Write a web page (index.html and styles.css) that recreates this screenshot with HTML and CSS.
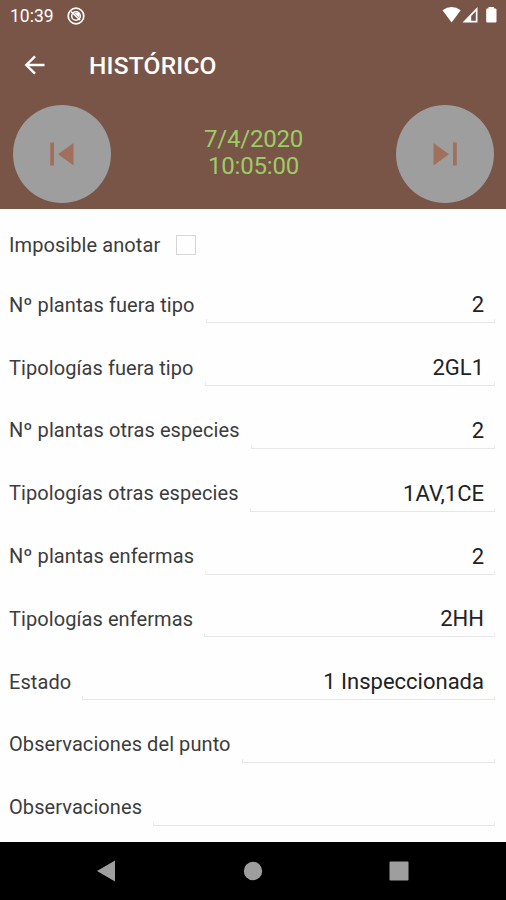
FILE: index.html
```html
<!DOCTYPE html>
<html lang="es">
<head>
    <meta charset="UTF-8">
    <title>Histórico</title>
    <link rel="stylesheet" href="styles.css">
</head>
<body>
<div class="screen">
    <div class="status-bar">
        <span class="clock">10:39</span>
        <svg class="app-icon" width="18" height="18" viewBox="0 0 18 18">
            <circle cx="9" cy="9" r="7.8" fill="none" stroke="#fff" stroke-width="1.7"/>
            <circle cx="9" cy="9" r="4.3" fill="none" stroke="#fff" stroke-width="1.5"/>
            <path d="M4 4.5L13 13" stroke="#fff" stroke-width="1.5"/>
            <path d="M7 6.2L12.5 5.8L12.3 10.5Z" fill="#fff"/>
        </svg>
        <svg class="signals" width="56" height="18" viewBox="0 0 56 18">
            <path d="M0.5 4.2Q9.6 -2 18.7 4.2L9.6 16.4Z" fill="#fff"/>
            <path d="M20.5 16.5L35.5 1V16.5Z" fill="#fff"/>
            <path d="M29.2 14.8V10L33.8 5.2V14.8Z" fill="#795548"/>
            <path d="M46.5 1H52V2.5H53.5Q54.5 2.5 54.5 3.5V15.5Q54.5 16.5 53.5 16.5H45.2Q44.2 16.5 44.2 15.5V3.5Q44.2 2.5 45.2 2.5H46.5Z" fill="#fff"/>
        </svg>
    </div>

    <div class="app-bar">
        <svg class="back" width="22" height="20" viewBox="0 0 22 20">
            <path d="M20.5 10H2.5M11 1.3L2.3 10L11 18.7" fill="none" stroke="#fff" stroke-width="2.4"/>
        </svg>
        <h1>HISTÓRICO</h1>
    </div>

    <div class="date-nav">
        <button class="round" aria-label="Anterior">
            <svg width="26" height="24" viewBox="0 0 26 24">
                <path d="M1.2 0.5H5V23.5H1.2ZM24.5 1V23.5L9 12.2Z"/>
            </svg>
        </button>
        <div class="date">7/4/2020<br>10:05:00</div>
        <button class="round" aria-label="Siguiente">
            <svg width="26" height="24" viewBox="0 0 26 24">
                <path d="M1.5 1V23.5L17 12.2ZM21 0.5H24.8V23.5H21Z"/>
            </svg>
        </button>
    </div>

    <div class="form">
        <div class="row check-row">
            <span class="label">Imposible anotar</span>
            <span class="checkbox"></span>
        </div>
        <div class="row">
            <span class="label">Nº plantas fuera tipo</span>
            <span class="field">2</span>
        </div>
        <div class="row">
            <span class="label">Tipologías fuera tipo</span>
            <span class="field">2GL1</span>
        </div>
        <div class="row">
            <span class="label">Nº plantas otras especies</span>
            <span class="field">2</span>
        </div>
        <div class="row">
            <span class="label">Tipologías otras especies</span>
            <span class="field">1AV,1CE</span>
        </div>
        <div class="row">
            <span class="label">Nº plantas enfermas</span>
            <span class="field">2</span>
        </div>
        <div class="row">
            <span class="label">Tipologías enfermas</span>
            <span class="field">2HH</span>
        </div>
        <div class="row">
            <span class="label">Estado</span>
            <span class="field">1 Inspeccionada</span>
        </div>
        <div class="row">
            <span class="label">Observaciones del punto</span>
            <span class="field"></span>
        </div>
        <div class="row">
            <span class="label">Observaciones</span>
            <span class="field"></span>
        </div>
    </div>

    <div class="system-nav">
        <svg width="20" height="22" viewBox="0 0 20 22"><path d="M1 11L19 0.5V21.5Z"/></svg>
        <svg width="20" height="20" viewBox="0 0 20 20"><circle cx="10" cy="10" r="9.2"/></svg>
        <svg width="20" height="20" viewBox="0 0 20 20"><rect x="0.5" y="0.5" width="19" height="19" rx="1"/></svg>
    </div>
</div>
</body>
</html>
```
FILE: styles.css
```css
* {
    box-sizing: border-box;
}

body {
    margin: 0;
    font-family: Roboto, sans-serif;
    background: #fefefe;
    color: #3c3c3c;
}

.screen {
    display: flex;
    flex-direction: column;
    height: 900px;
    overflow: hidden;
}

/* barra de estado */
.status-bar {
    display: flex;
    align-items: center;
    height: 32px;
    padding: 0 8px 0 10px;
    background: #795548;
    color: #fff;
}

.clock {
    font-size: 17.5px;
    line-height: 32px;
}

.app-icon {
    margin-left: 13px;
    margin-top: -1px;
}

.signals {
    margin-left: auto;
    margin-top: -2px;
}

.app-bar {
    display: flex;
    align-items: center;
    height: 66px;
    padding-left: 24px;
    background: #795548;
    color: #fff;
}

.app-bar h1 {
    margin: 2px 0 0 43px;
    font-size: 24.5px;
    font-weight: 500;
    line-height: 30px;
    letter-spacing: 0.2px;
}

/* fecha y botones */
.date-nav {
    display: flex;
    justify-content: space-between;
    align-items: center;
    height: 111px;
    padding: 0 12px 0 13px;
    background: #795548;
}

.round {
    display: flex;
    justify-content: center;
    align-items: center;
    width: 98px;
    height: 98px;
    padding: 0;
    border: none;
    border-radius: 50%;
    background: #9e9e9e;
}

.round svg {
    fill: #a1705d;
}

.date {
    margin-top: -2px;
    font-size: 24px;
    line-height: 27px;
    letter-spacing: -0.2px;
    text-align: center;
    color: #9ccc65;
}

/* formulario */
.form {
    flex: 1;
    padding: 8px 11px 0 9px;
}

.row {
    display: flex;
    align-items: center;
    height: 62.8px;
}

.check-row {
    height: 56.5px;
}

.label {
    font-size: 20px;
    letter-spacing: 0.08px;
    white-space: nowrap;
}

.checkbox {
    width: 20px;
    height: 20px;
    margin-left: 16px;
    border: 1px solid #d6d6d6;
}

.field {
    position: relative;
    flex: 1;
    height: 37px;
    margin-left: 11px;
    padding-right: 11px;
    border-bottom: 1.5px solid #e6e6e6;
    font-size: 22px;
    line-height: 38px;
    text-align: right;
    color: #222;
}

/* remates laterales de la línea */
.field::after {
    content: "";
    position: absolute;
    left: 0;
    right: 0;
    bottom: 0;
    height: 3px;
    border: solid #ececec;
    border-width: 0 1px;
}

/* botones del sistema */
.system-nav {
    display: flex;
    justify-content: space-between;
    align-items: center;
    height: 58px;
    padding: 0 97px 0 96px;
    background: #000;
}

.system-nav svg {
    fill: #9e9e9e;
}
```
